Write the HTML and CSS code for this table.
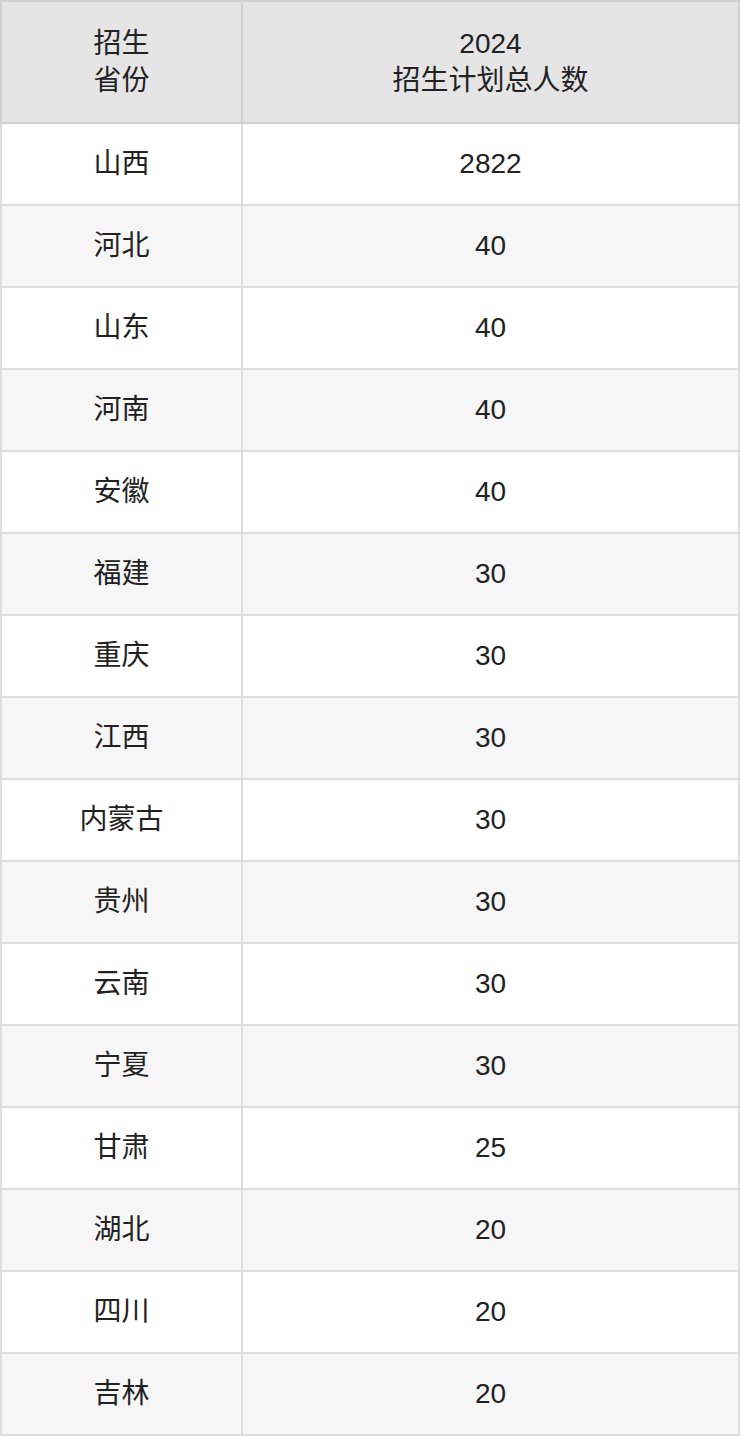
FILE: index.html
```html
<!DOCTYPE html>
<html lang="zh-CN">
<head>
<meta charset="utf-8">
<title>招生计划</title>
<link rel="stylesheet" href="styles.css">
</head>
<body>
<table class="plan">
  <colgroup><col class="col-prov"><col class="col-num"></colgroup>
  <thead>
    <tr><th>招生<br>省份</th><th>2024<br>招生计划总人数</th></tr>
  </thead>
  <tbody>
    <tr><td>山西</td><td>2822</td></tr>
    <tr><td>河北</td><td>40</td></tr>
    <tr><td>山东</td><td>40</td></tr>
    <tr><td>河南</td><td>40</td></tr>
    <tr><td>安徽</td><td>40</td></tr>
    <tr><td>福建</td><td>30</td></tr>
    <tr><td>重庆</td><td>30</td></tr>
    <tr><td>江西</td><td>30</td></tr>
    <tr><td>内蒙古</td><td>30</td></tr>
    <tr><td>贵州</td><td>30</td></tr>
    <tr><td>云南</td><td>30</td></tr>
    <tr><td>宁夏</td><td>30</td></tr>
    <tr><td>甘肃</td><td>25</td></tr>
    <tr><td>湖北</td><td>20</td></tr>
    <tr><td>四川</td><td>20</td></tr>
    <tr><td>吉林</td><td>20</td></tr>
  </tbody>
</table>
</body>
</html>
```
FILE: styles.css
```css
html, body {
  margin: 0;
  padding: 0;
  background: #ffffff;
}
.plan {
  width: 740px;
  border-collapse: collapse;
  table-layout: fixed;
  font-family: "Liberation Sans", Arial, "Noto Sans CJK SC", sans-serif;
  font-size: 28px;
  color: #222222;
}
.col-prov { width: 241px; }
.plan th,
.plan td {
  border: 2px solid #dddddd;
  text-align: center;
  vertical-align: middle;
  padding: 0;
}
.plan th {
  background: #e5e5e5;
  font-weight: normal;
  line-height: 37px;
  height: 120px;
  border-color: #d0d0d0;
}
.plan td {
  height: 80px;
  line-height: 32px;
}
.plan tbody tr:nth-child(even) td {
  background: #f6f6f6;
}
```
